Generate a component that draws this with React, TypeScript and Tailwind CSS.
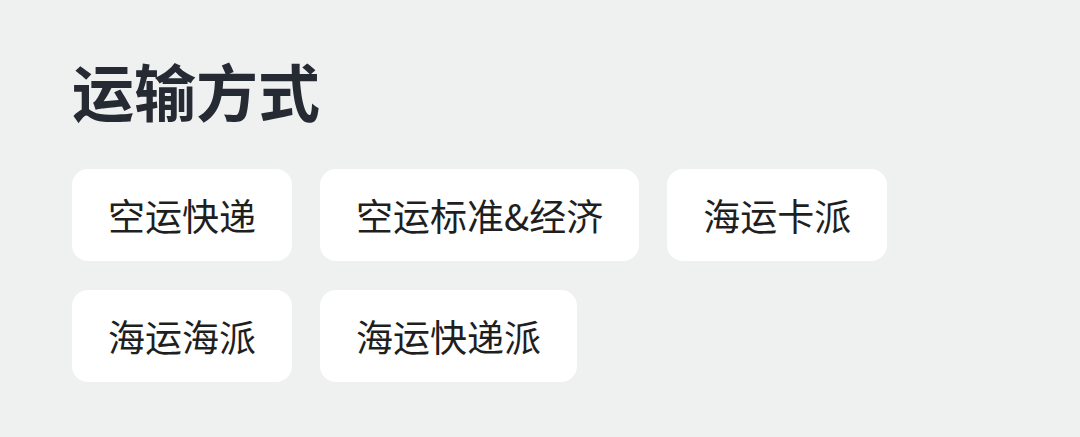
const options = ["空运快递", "空运标准&经济", "海运卡派", "海运海派", "海运快递派"];

export default function App() {
  return (
    <div
      className="h-[437px] w-[1080px] bg-[#eff1f1] px-[72px] pt-[52px]"
      style={{ fontFamily: '"Noto Sans CJK SC", "Noto Sans", sans-serif' }}
    >
      <h2 className="text-[62px] font-bold leading-[76px] text-[#252a33]">运输方式</h2>
      <div className="mt-[41px] flex w-[830px] flex-wrap gap-x-[28px] gap-y-[29px]">
        {options.map((label) => (
          <button
            key={label}
            className="h-[92px] rounded-[16px] bg-white px-[36px] text-[37px] leading-none text-[#1f1f1f]"
          >
            {label}
          </button>
        ))}
      </div>
    </div>
  );
}
